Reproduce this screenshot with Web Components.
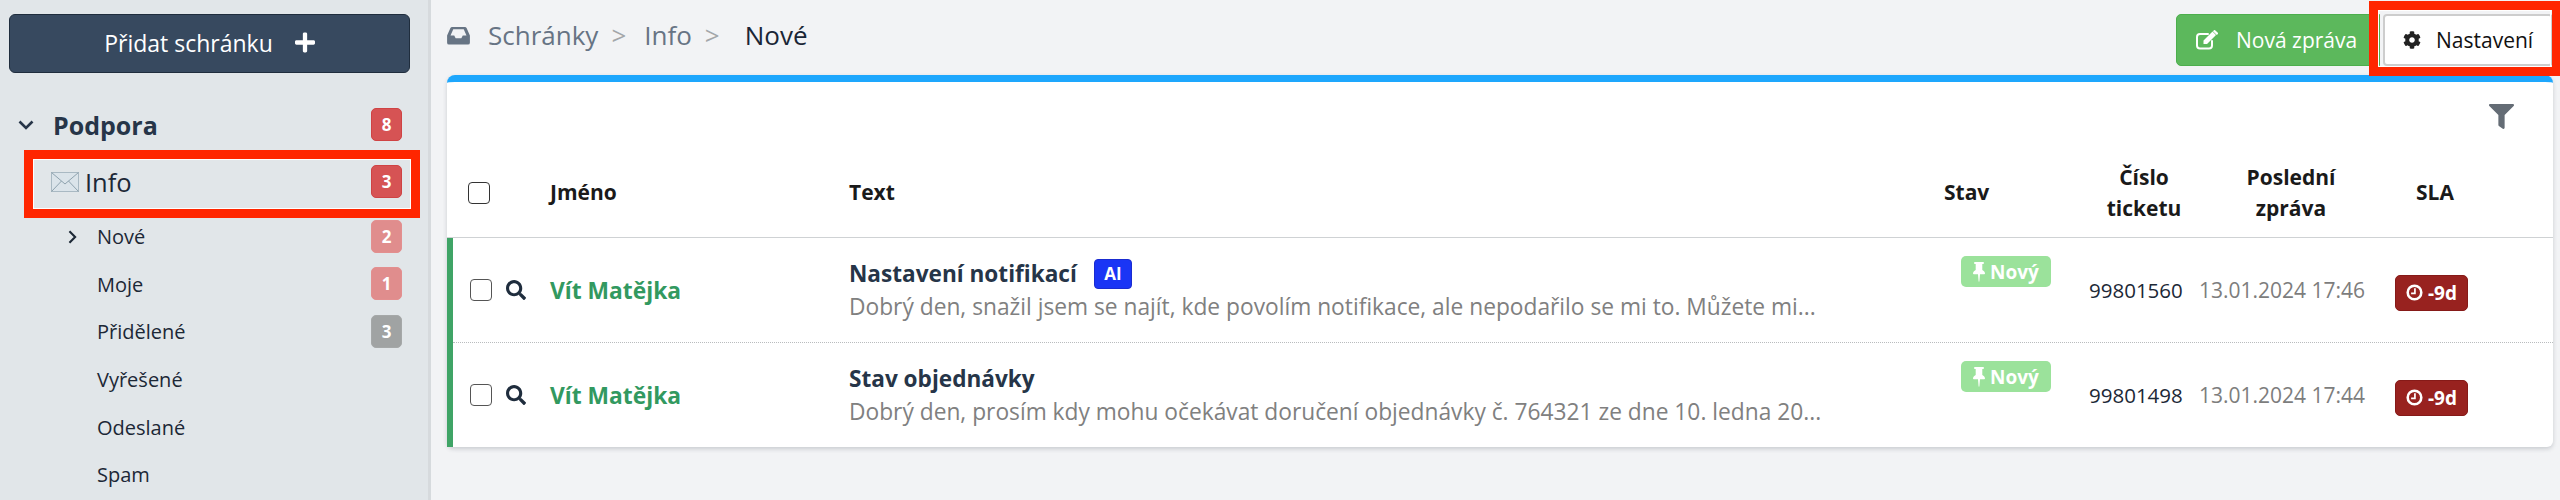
<!DOCTYPE html>
<html lang="cs">
<head>
<meta charset="utf-8">
<title>Schránky</title>
<style>
  html, body { margin: 0; height: 500px; overflow: hidden; }
  body { font-family: "Open Sans", "Noto Sans", sans-serif; color: #1c2836; }
  inbox-app { height: 500px; }
</style>
</head>
<body>
<inbox-app>
  <side-bar slot="side">
    <nav-row level="group" open count="8" tone="red">Podpora</nav-row>
    <nav-row level="box" mail count="3" tone="red" marked>Info</nav-row>
    <nav-row level="sub" arrow count="2" tone="pale">Nové</nav-row>
    <nav-row level="sub" count="1" tone="pale">Moje</nav-row>
    <nav-row level="sub" count="3" tone="grey">Přidělené</nav-row>
    <nav-row level="sub">Vyřešené</nav-row>
    <nav-row level="sub">Odeslané</nav-row>
    <nav-row level="sub">Spam</nav-row>
  </side-bar>
  <top-bar slot="main"></top-bar>
  <ticket-table slot="main">
    <ticket-row name="Vít Matějka" subject="Nastavení notifikací" ai number="99801560" date="13.01.2024 17:46"
      snippet="Dobrý den, snažil jsem se najít, kde povolím notifikace, ale nepodařilo se mi to. Můžete mi..."></ticket-row>
    <ticket-row name="Vít Matějka" subject="Stav objednávky" number="99801498" date="13.01.2024 17:44"
      snippet="Dobrý den, prosím kdy mohu očekávat doručení objednávky č. 764321 ze dne 10. ledna 20..."></ticket-row>
  </ticket-table>
</inbox-app>

<script>
const icons = {
  search: `<svg viewBox="0 0 512 512"><path fill="currentColor" d="M505 442.7L405.3 343c-4.5-4.5-10.6-7-17-7H372c27.6-35.3 44-79.7 44-128C416 93.1 322.9 0 208 0S0 93.1 0 208s93.1 208 208 208c48.3 0 92.7-16.4 128-44v16.3c0 6.4 2.5 12.5 7 17l99.7 99.7c9.4 9.4 24.6 9.4 33.9 0l28.3-28.3c9.4-9.4 9.4-24.6.1-34zM208 336c-70.7 0-128-57.2-128-128 0-70.7 57.2-128 128-128 70.7 0 128 57.2 128 128 0 70.7-57.2 128-128 128z"/></svg>`,
  filter: `<svg viewBox="0 0 512 512"><path fill="currentColor" d="M487.976 0H24.028C2.71 0-8.047 25.866 7.058 40.971L192 225.941V432c0 7.831 3.821 15.17 10.237 19.662l80 55.98C298.02 518.69 320 507.493 320 487.98V225.941l184.947-184.97C520.021 25.896 509.338 0 487.976 0z"/></svg>`,
  plus: `<svg viewBox="0 0 448 512"><path fill="currentColor" d="M416 208H272V64c0-17.67-14.33-32-32-32h-32c-17.67 0-32 14.33-32 32v144H32c-17.67 0-32 14.33-32 32v32c0 17.67 14.33 32 32 32h144v144c0 17.67 14.33 32 32 32h32c17.67 0 32-14.33 32-32V304h144c17.67 0 32-14.33 32-32v-32c0-17.67-14.33-32-32-32z"/></svg>`,
  cog: `<svg viewBox="0 0 512 512"><path fill="currentColor" d="M487.4 315.7l-42.6-24.6c4.3-23.2 4.3-47 0-70.2l42.6-24.6c4.9-2.8 7.1-8.6 5.5-14-11.1-35.6-30-67.8-54.7-94.6-3.8-4.1-10-5.1-14.8-2.3L380.8 110c-17.9-15.4-38.5-27.3-60.8-35.1V25.8c0-5.6-3.9-10.5-9.4-11.7-36.7-8.2-74.3-7.8-109.2 0-5.5 1.2-9.4 6.1-9.4 11.7V75c-22.2 7.9-42.8 19.8-60.8 35.1L88.7 85.5c-4.9-2.8-11-1.9-14.8 2.3-24.7 26.7-43.6 58.9-54.7 94.6-1.7 5.4.6 11.2 5.5 14L67.3 221c-4.3 23.2-4.3 47 0 70.2l-42.6 24.6c-4.9 2.8-7.1 8.6-5.5 14 11.1 35.6 30 67.8 54.7 94.6 3.8 4.1 10 5.1 14.8 2.3l42.6-24.6c17.9 15.4 38.5 27.3 60.8 35.1v49.2c0 5.6 3.9 10.5 9.4 11.7 36.7 8.2 74.3 7.8 109.2 0 5.5-1.2 9.4-6.1 9.4-11.7v-49.2c22.2-7.9 42.8-19.8 60.8-35.1l42.6 24.6c4.9 2.8 11 1.9 14.8-2.3 24.7-26.7 43.6-58.9 54.7-94.6 1.5-5.5-.7-11.3-5.6-14.1zM256 336c-44.1 0-80-35.9-80-80s35.9-80 80-80 80 35.9 80 80-35.9 80-80 80z"/></svg>`,
  inbox: `<svg viewBox="0 0 24 20"><path fill="currentColor" fill-rule="evenodd" d="M5.2 1h13.6a2 2 0 0 1 1.7 1L24 10v7.5a2 2 0 0 1-2 2H2a2 2 0 0 1-2-2V10l3.500-8a2 2 0 0 1 1.700-1zM6.500 3.500L3.600 10H7.500l1.500 3h6l1.500-3h3.900l-2.900-6.500z"/></svg>`,
  edit: `<svg viewBox="0 0 22 20"><path fill="none" stroke="currentColor" stroke-width="2" stroke-linecap="round" d="M16 11v4.500a3 3 0 0 1-3 3H4a3 3 0 0 1-3-3V7a3 3 0 0 1 3-3h8"/><path fill="currentColor" d="M7.500 10.500L16.500 1.500l3.500 3.500-9 9H7.500zM17.700.4a1.200 1.200 0 0 1 1.700 0l2.200 2.200a1.200 1.200 0 0 1 0 1.700l-.8.800-3.900-3.900z"/></svg>`,
  pin: `<svg viewBox="0 0 12 20"><path fill="currentColor" d="M2 0h8a1 1 0 0 1 0 2H9.300v6c1.600.8 2.700 2.200 2.700 3.500a.8.800 0 0 1-.8.800H7l-.6 7a.4.4 0 0 1-.8 0l-.6-7H.8a.8.800 0 0 1-.8-.8C0 10.200 1.100 8.800 2.700 8V2H2a1 1 0 0 1 0-2z"/></svg>`,
  clock: `<svg viewBox="0 0 20 20"><circle cx="10" cy="10" r="8" fill="none" stroke="currentColor" stroke-width="3"/><path fill="none" stroke="currentColor" stroke-width="2" d="M10.500 5v6H6"/></svg>`,
  down: `<svg viewBox="0 0 16 10"><path fill="none" stroke="currentColor" stroke-width="2.600" d="M1.500 1.500L8 8l6.500-6.500"/></svg>`,
  right: `<svg viewBox="0 0 10 16"><path fill="none" stroke="currentColor" stroke-width="2.400" d="M1.500 1.500L8 8l-6.500 6.500"/></svg>`,
  mail: `<svg viewBox="0 0 28 20"><rect x=".5" y=".5" width="27" height="19" fill="#dbe4ea" stroke="#a9b9c3"/><path fill="none" stroke="#8ea2ae" d="M.5.5L14 12 27.500.5M.5 19.500L10.500 9M27.500 19.500L17.500 9"/></svg>`
};

const appTemplate = document.createElement("template");
appTemplate.innerHTML = `
<style>
  :host { display: flex; width: 2560px; background: #f2f3f5; }
  .main { flex: 1; min-width: 0; padding: 14px 7px 0 16px; }
</style>
<slot name="side"></slot>
<div class="main"><slot name="main"></slot></div>
`;

class InboxApp extends HTMLElement {
  constructor() {
    super();
    this.attachShadow({ mode: "open" });
    this.shadowRoot.appendChild(appTemplate.content.cloneNode(true));
  }
}

const sideTemplate = document.createElement("template");
sideTemplate.innerHTML = `
<style>
  :host {
    display: block;
    box-sizing: border-box;
    width: 431px;
    height: 500px;
    padding: 14px 21px 0 9px;
    background: #e1e6e9;
    border-right: 3px solid #d6dadd;
    overflow: hidden;
  }
  button {
    display: flex;
    align-items: center;
    justify-content: center;
    gap: 22px;
    box-sizing: border-box;
    width: 401px;
    height: 59px;
    margin: 0 0 32px;
    padding: 0 0 2px;
    background: #37495f;
    border: 1px solid #1f2d3d;
    border-radius: 6px;
    color: #fff;
    font: 500 23px "Open Sans", sans-serif;
  }
  svg { display: block; width: 20px; height: 23px; }
</style>
<button>Přidat schránku ${icons.plus}</button>
<slot></slot>
`;

class SideBar extends HTMLElement {
  constructor() {
    super();
    this.attachShadow({ mode: "open" });
    this.shadowRoot.appendChild(sideTemplate.content.cloneNode(true));
  }
}

const navTemplate = document.createElement("template");
navTemplate.innerHTML = `
<style>
  :host { display: flex; align-items: center; position: relative; box-sizing: border-box; width: 393px; height: 47.600px; font-size: 20px; color: #1c2836; }
  :host([level="group"]) { height: 40px; margin-bottom: 17px; font-size: 25px; font-weight: 700; color: #263548; }
  :host([level="box"]) { height: 40px; margin-bottom: 11px; font-size: 25.500px; }
  .lead { flex: none; width: 88px; display: flex; align-items: center; justify-content: flex-end; padding-right: 20px; box-sizing: border-box; }
  :host([level="group"]) .lead { width: 44px; padding-right: 0; justify-content: flex-start; padding-left: 9px; }
  :host([level="box"]) .lead { width: 76px; padding-right: 6px; justify-content: flex-end; }
  .down { width: 16px; height: 10px; display: none; }
  .right { width: 9px; height: 14px; display: none; }
  .mail { flex: none; width: 28px; height: 20px; display: none; }
  .mail svg, .down svg, .right svg { display: block; width: 100%; height: 100%; }
  .label { flex: 1; }
  .count {
    position: absolute;
    left: 362px;
    top: 50%;
    box-sizing: border-box;
    width: 31px;
    height: 33px;
    margin-top: -17px;
    border-radius: 5px;
    color: #fff;
    font-size: 17px;
    font-weight: 700;
    line-height: 31px;
    text-align: center;
  }
  .red { background: #d65354; border: 1px solid #cf4344; }
  .pale { background: #e08d8d; border: 1px solid #e38f8f; }
  .grey { background: #a0a3a3; border: 1px solid #a5a8a8; }
  .mark {
    position: absolute;
    left: 15px;
    top: -12px;
    width: 396px;
    height: 68px;
    box-sizing: border-box;
    border: 9px solid #ff2600;
    outline: 1px solid #fff;
    outline-offset: -10px;
    display: none;
  }
</style>
<span class="lead">
  <span class="down">${icons.down}</span>
  <span class="right">${icons.right}</span>
  <span class="mail">${icons.mail}</span>
</span>
<span class="label"><slot></slot></span>
<span class="mark"></span>
`;

class NavRow extends HTMLElement {
  constructor() {
    super();
    this.attachShadow({ mode: "open" });
  }

  connectedCallback() {
    const template = navTemplate.content.cloneNode(true);
    this.shadowRoot.appendChild(template);

    const show = (selector) => {
      this.shadowRoot.querySelector(selector).style.display = "block";
    };
    if (this.hasAttribute("open")) show(".down");
    if (this.hasAttribute("arrow")) show(".right");
    if (this.hasAttribute("mail")) show(".mail");
    if (this.hasAttribute("marked")) show(".mark");

    if (this.hasAttribute("count")) {
      const count = document.createElement("span");
      count.className = `count ${this.getAttribute("tone")}`;
      count.textContent = this.getAttribute("count");
      this.shadowRoot.appendChild(count);
    }
  }
}

const topTemplate = document.createElement("template");
topTemplate.innerHTML = `
<style>
  :host { display: flex; align-items: center; position: relative; height: 52px; margin-bottom: 9px; }
  .crumbs { display: flex; align-items: center; flex: 1; height: 52px; padding-bottom: 10px; box-sizing: border-box; font-size: 26px; color: #677484; }
  .crumbs svg { display: block; width: 23px; height: 19px; margin-right: 18px; }
  .sep { color: #a3a6a9; margin: 0 18px 0 13px; }
  .sep + .now { margin-left: 7px; color: #1a2636; }
  .btn {
    display: flex;
    align-items: center;
    box-sizing: border-box;
    height: 52px;
    font-size: 21px;
  }
  .btn svg { display: block; }
  .new { width: 204px; padding-left: 19px; gap: 18px; background: #5cb85c; border: 1px solid #4cae4c; border-radius: 5px 0 0 5px; color: #fff; }
  .new svg { width: 22px; height: 20px; }
  .set { width: 170px; padding-left: 18px; gap: 15px; background: #fff; border: 2px solid #cdcdcd; border-radius: 4px; color: #111; margin-left: 3px; }
  .set svg { width: 18px; height: 18px; color: #222; }
  .mark {
    position: absolute;
    right: -7px;
    top: -13px;
    width: 191px;
    height: 75px;
    box-sizing: border-box;
    border: 9px solid #ff2600;
    border-right-width: 8px;
    outline: 1px solid #fff;
    outline-offset: -10px;
  }
</style>
<div class="crumbs">
  ${icons.inbox}
  <span>Schránky</span><span class="sep">&gt;</span>
  <span>Info</span><span class="sep">&gt;</span>
  <span class="now">Nové</span>
</div>
<div class="btn new">${icons.edit}<span>Nová zpráva</span></div>
<div class="btn set">${icons.cog}<span>Nastavení</span></div>
<span class="mark"></span>
`;

class TopBar extends HTMLElement {
  constructor() {
    super();
    this.attachShadow({ mode: "open" });
    this.shadowRoot.appendChild(topTemplate.content.cloneNode(true));
  }
}

const tableTemplate = document.createElement("template");
tableTemplate.innerHTML = `
<style>
  :host {
    display: block;
    --cols: 299px 1095px 145px 110px 184px 104px 1fr;
    background: #fff;
    border-top: 7px solid #1ea7fd;
    border-radius: 8px 8px 6px 6px;
    box-shadow: 0 2px 4px rgba(60, 70, 80, .22);
  }
  .tools { display: flex; justify-content: flex-end; align-items: flex-start; height: 66px; padding: 22px 39px 0 0; box-sizing: border-box; color: #646c75; }
  .tools svg { display: block; width: 25px; height: 25px; }
  .head {
    display: grid;
    grid-template-columns: 103px var(--cols);
    align-items: center;
    box-sizing: border-box;
    height: 90px;
    border-bottom: 1px solid #cfd2d4;
    font-size: 21px;
    font-weight: 700;
    line-height: 31px;
    color: #1a1a1a;
  }
  .box { box-sizing: border-box; width: 22px; height: 22px; margin-left: 21px; border: 1.500px solid #333; border-radius: 4px; }
  .mid { text-align: center; }
</style>
<div class="tools">${icons.filter}</div>
<div class="head">
  <span class="box"></span>
  <span>Jméno</span>
  <span>Text</span>
  <span>Stav</span>
  <span class="mid">Číslo<br>ticketu</span>
  <span class="mid">Poslední<br>zpráva</span>
  <span class="mid">SLA</span>
  <span></span>
</div>
<slot></slot>
`;

class TicketTable extends HTMLElement {
  constructor() {
    super();
    this.attachShadow({ mode: "open" });
    this.shadowRoot.appendChild(tableTemplate.content.cloneNode(true));
  }
}

const rowTemplate = document.createElement("template");
rowTemplate.innerHTML = `
<style>
  :host { display: block; border-left: 6px solid #3fa466; }
  .row {
    display: grid;
    grid-template-columns: 97px var(--cols);
    align-items: center;
    box-sizing: border-box;
    height: 105px;
    border-bottom: 1px dotted #b9bcbe;
    color: #1c2836;
  }
  :host(:last-child) .row { height: 104px; border-bottom: 0; margin-bottom: 0; }
  .lead { display: flex; align-items: center; gap: 14px; padding-left: 17px; }
  .box { box-sizing: border-box; width: 22px; height: 22px; border: 1.500px solid #555; border-radius: 4px; }
  .lead svg { display: block; width: 20px; height: 20px; color: #1f2d3d; }
  .name { font-size: 22.800px; font-weight: 700; color: #329960; }
  .text { width: 1000px; }
  .subject { display: flex; align-items: center; height: 30px; font-size: 22.600px; font-weight: 700; color: #263548; }
  .ai { display: none; margin-left: 17px; width: 38px; height: 30px; box-sizing: border-box; background: #1a35f5; border: 1px solid #1a2cd0; border-radius: 4px; color: #fff; font-size: 17px; font-weight: 700; line-height: 28px; text-align: center; }
  .snippet { margin-top: 3px; font-size: 22.750px; line-height: 30px; color: #808080; white-space: nowrap; }
  .state { align-self: start; margin: 18px 0 0 17px; display: flex; align-items: center; justify-content: center; gap: 5px; width: 90px; height: 31px; box-sizing: border-box; background: #9be29b; border-radius: 5px; color: #fff; font-size: 19px; font-weight: 700; }
  .state svg { display: block; width: 12px; height: 20px; }
  .num { font-size: 20.500px; }
  .date { font-size: 21px; color: #7d7d7d; white-space: nowrap; }
  .sla { display: flex; align-items: center; justify-content: center; gap: 5px; margin: 5px 0 0 12px; width: 73px; height: 36px; box-sizing: border-box; background: #98221f; border: 1px solid #861a18; border-radius: 5px; color: #fff; font-size: 19px; font-weight: 700; }
  .sla svg { display: block; width: 17px; height: 17px; }
</style>
<div class="row">
  <div class="lead"><span class="box"></span>${icons.search}</div>
  <span class="name"></span>
  <div class="text">
    <div class="subject"><span class="title"></span><span class="ai">AI</span></div>
    <div class="snippet"></div>
  </div>
  <div class="state">${icons.pin}<span>Nový</span></div>
  <span class="num"></span>
  <span class="date"></span>
  <div class="sla">${icons.clock}<span>-9d</span></div>
  <span></span>
</div>
`;

class TicketRow extends HTMLElement {
  constructor() {
    super();
    this.attachShadow({ mode: "open" });
  }

  connectedCallback() {
    const template = rowTemplate.content.cloneNode(true);
    this.shadowRoot.appendChild(template);

    const root = this.shadowRoot;
    root.querySelector(".name").textContent = this.getAttribute("name");
    root.querySelector(".title").textContent = this.getAttribute("subject");
    root.querySelector(".snippet").textContent = this.getAttribute("snippet");
    root.querySelector(".num").textContent = this.getAttribute("number");
    root.querySelector(".date").textContent = this.getAttribute("date");
    if (this.hasAttribute("ai")) {
      root.querySelector(".ai").style.display = "block";
    }
  }
}

window.customElements.define("inbox-app", InboxApp);
window.customElements.define("side-bar", SideBar);
window.customElements.define("nav-row", NavRow);
window.customElements.define("top-bar", TopBar);
window.customElements.define("ticket-table", TicketTable);
window.customElements.define("ticket-row", TicketRow);
</script>
</body>
</html>
